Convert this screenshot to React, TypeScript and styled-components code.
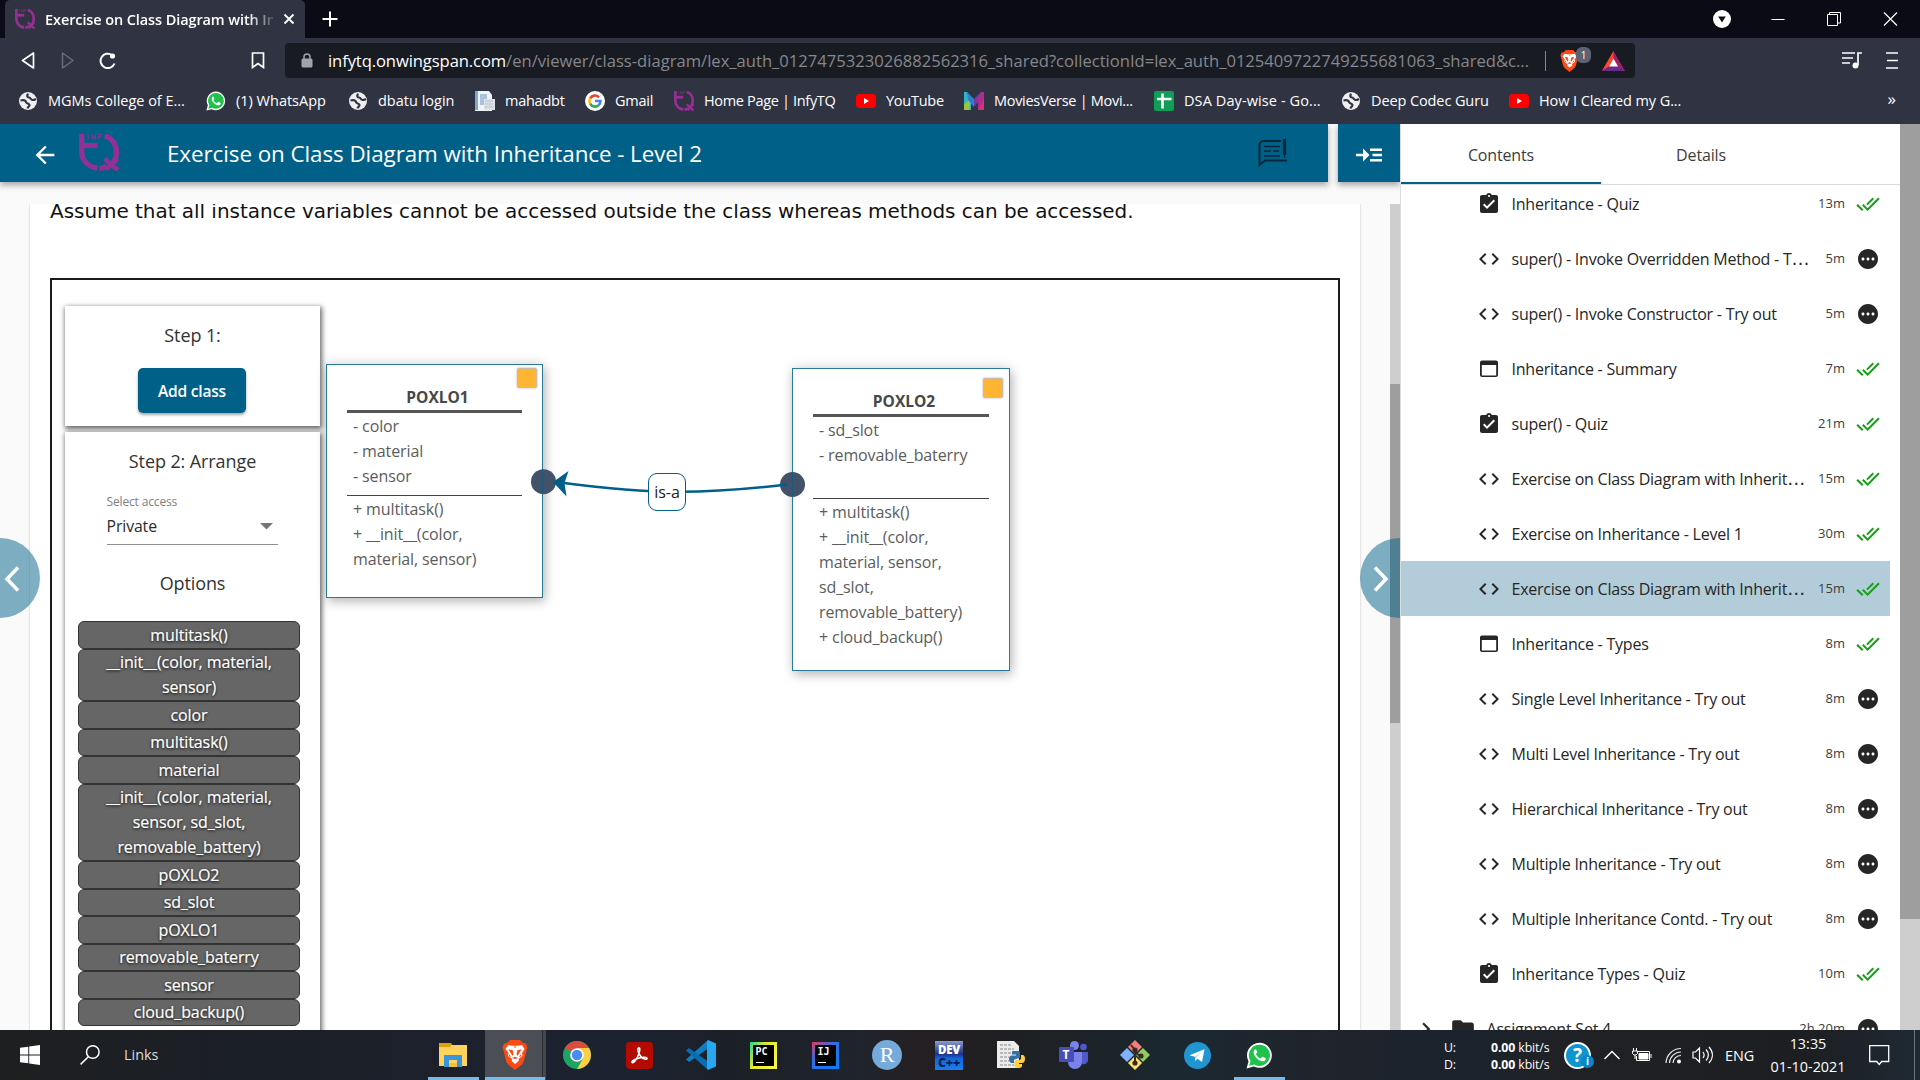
import React from 'react';
import styled, { createGlobalStyle } from 'styled-components';
import { MdArrowBack, MdAssignmentTurnedIn, MdCode, MdDoneAll, MdFolder, MdKeyboardArrowRight, MdPending } from 'react-icons/md';

const GlobalStyle = createGlobalStyle`
  *, *::before, *::after { box-sizing: border-box; }
  body { margin: 0; overflow: hidden; background: #fafafa; font-family: "Open Sans", "Noto Sans", sans-serif; }
  svg { display: block; flex: none; }
`;

const Screen = styled.div`
  width: 1920px;
  height: 1080px;
  display: flex;
  flex-direction: column;
  overflow: hidden;
`;

/* ---------- browser chrome ---------- */

const TabStrip = styled.div`
  height: 38px;
  flex: none;
  display: flex;
  align-items: center;
  background: #0a0b14;
  color: #fff;
  padding-left: 5px;
`;

const BrowserTab = styled.div`
  width: 300px;
  height: 38px;
  display: flex;
  align-items: center;
  padding: 0 10px;
  background: #303342;
  border-radius: 5px 5px 0 0;
`;

const TabTitle = styled.div`
  width: 229px;
  margin-left: 10px;
  margin-right: 10px;
  overflow: hidden;
  white-space: nowrap;
  font-size: 14.5px;
  font-weight: 600;
  letter-spacing: -0.1px;
  mask-image: linear-gradient(90deg, #000 203px, transparent 233px);
`;

const WindowControls = styled.div`
  margin-left: auto;
  display: flex;
  align-items: center;
  gap: 40px;
  padding-right: 22px;
`;

const Toolbar = styled.div`
  height: 45px;
  flex: none;
  display: flex;
  align-items: center;
  padding: 0 22px 0 21px;
  background: #303342;
`;

const NavButtons = styled.div`
  width: 264px;
  display: flex;
  align-items: center;
  gap: 25px;
`;

const BookmarkToggle = styled.div`
  margin-left: auto;
  margin-right: 20px;
`;

const AddressBar = styled.div`
  width: 1350px;
  height: 35px;
  display: flex;
  align-items: center;
  padding: 0 10px 0 16px;
  color: #a0a3aa;
  background: #191b22;
  border-radius: 4px;
`;

const Url = styled.div`
  width: 1202px;
  margin-left: 15px;
  white-space: nowrap;
  overflow: hidden;
  font-size: 16.6px;
  letter-spacing: 0px;
  color: #85878c;
`;

const UrlHost = styled.span`
  color: #fff;
  letter-spacing: -0.1px;
`;

const UrlDivider = styled.div`
  width: 1px;
  height: 20px;
  margin: 0 14px 0 15px;
  background: #85878c;
`;

const Shield = styled.div`
  position: relative;
  width: 42px;
`;

const ShieldCount = styled.span`
  position: absolute;
  left: 16px;
  top: -3px;
  width: 15px;
  height: 16px;
  border-radius: 6px;
  background: #5d6273;
  color: #fff;
  font-size: 10px;
  line-height: 16px;
  text-align: center;
`;

const ToolbarEnd = styled.div`
  margin-left: auto;
  display: flex;
  align-items: center;
  gap: 24px;
`;

const Bookmarks = styled.div`
  height: 41px;
  flex: none;
  display: flex;
  align-items: flex-start;
  padding: 6px 0 0 18px;
  color: #fff;
  background: #303342;
`;

const Bookmark = styled.div<{ $w: number; $ls: number }>`
  width: ${p => p.$w}px;
  height: 23px;
  flex: none;
  display: flex;
  align-items: center;
  gap: 10px;
  font-size: 14.5px;
  letter-spacing: ${p => p.$ls}px;
  white-space: nowrap;
`;

const More = styled.div`
  margin-left: auto;
  padding-right: 24px;
  font-size: 17px;
  line-height: 20px;
`;

/* ---------- page ---------- */

const Page = styled.div`
  height: 906px;
  flex: none;
  display: flex;
  background: #fafafa;
`;

const Viewer = styled.div`
  position: relative;
  width: 1400px;
  display: flex;
  flex-direction: column;
  overflow: hidden;
`;

const HeaderRow = styled.div`
  height: 58px;
  flex: none;
  display: flex;
  justify-content: space-between;
`;

const Header = styled.div`
  width: 1328px;
  display: flex;
  align-items: center;
  padding: 0 39px 0 31px;
  color: #fff;
  background: #006088;
  box-shadow: 0 3px 6px rgba(0, 0, 0, 0.35);
`;

const BackButton = styled.div`
  padding-top: 3px;
`;

const HeaderTitle = styled.h1`
  margin: 0 auto 0 48px;
  font-size: 22.4px;
  font-weight: 400;
  letter-spacing: -0.07px;
`;

const HeaderLogo = styled.div`
  margin: -1px 0 0 20px;
`;

const CollapseButton = styled.div`
  width: 62px;
  display: flex;
  align-items: center;
  justify-content: center;
  padding-top: 4px;
  background: #006088;
  box-shadow: 0 3px 6px rgba(0, 0, 0, 0.35);
`;

const ScrollArea = styled.div`
  height: 826px;
  margin-top: 22px;
  display: flex;
  overflow: hidden;
`;

const Card = styled.div`
  width: 1330px;
  margin: 0 30px;
  padding: 0 20px;
  background: #fff;
  box-shadow: 0 0 2px rgba(0, 0, 0, 0.25);
`;

const Statement = styled.p`
  height: 74px;
  margin: 0;
  font-family: "DejaVu Sans", Verdana, sans-serif;
  font-size: 20px;
  line-height: 14px;
  letter-spacing: -0.042px;
  white-space: nowrap;
  color: #111;
`;

const Scrollbar = styled.div<{ $w: number; $top: number }>`
  width: ${p => p.$w}px;
  flex: none;
  padding-top: ${p => p.$top}px;
  background: #cecece;
`;

const Thumb = styled.div<{ $h: number }>`
  height: ${p => p.$h}px;
  background: #9e9e9e;
`;

const Canvas = styled.div`
  position: relative;
  height: 900px;
  padding: 26px 13px;
  border: 2px solid #1b1b1d;
`;

const Panel = styled.section<{ $h: number }>`
  width: 255px;
  height: ${p => p.$h}px;
  margin-bottom: 6px;
  display: flex;
  flex-direction: column;
  align-items: center;
  background: #fff;
  box-shadow: 1px 2px 5px 1px rgba(0, 0, 0, 0.6);
`;

const PanelTitle = styled.div<{ $mt: number }>`
  margin-top: ${p => p.$mt}px;
  height: 30px;
  line-height: 30px;
  font-size: 18px;
  letter-spacing: -0.1px;
  color: #333;
`;

const AddButton = styled.button`
  width: 108px;
  height: 45px;
  margin: 18px 1px 0 0;
  padding: 0;
  border: 0;
  border-radius: 5px;
  font-family: inherit;
  font-size: 15.6px;
  font-weight: 600;
  letter-spacing: -0.25px;
  color: #fff;
  background: #006088;
  box-shadow: 0 2px 3px rgba(0, 0, 0, 0.35);
`;

const SelectField = styled.div`
  width: 171px;
  height: 54px;
  margin: 15px 0 0 -1px;
  border-bottom: 1px solid #8f8f8f;
`;

const SelectLabel = styled.div`
  height: 22px;
  line-height: 22px;
  font-size: 12px;
  letter-spacing: -0.15px;
  color: #808080;
`;

const SelectValue = styled.div`
  height: 26px;
  display: flex;
  align-items: center;
  justify-content: space-between;
  padding-right: 5px;
  font-size: 15.8px;
  letter-spacing: -0.1px;
  color: #2b2b2b;
`;

const Options = styled.div`
  width: 222px;
  margin: 23px 7px 0 0;
`;

const Option = styled.div`
  padding: 0.5px 20px 0;
  border: 1px solid #333;
  border-radius: 6px;
  font-size: 16px;
  line-height: 25px;
  letter-spacing: -0.1px;
  text-align: center;
  color: #fff;
  -webkit-text-stroke: 0.2px #fff;
  text-shadow: 0 1px 3px #000;
  background: #666;
`;

const ClassBox = styled.article<{ $x: number; $y: number; $w: number; $h: number }>`
  position: absolute;
  left: ${p => p.$x}px;
  top: ${p => p.$y}px;
  width: ${p => p.$w}px;
  height: ${p => p.$h}px;
  padding: 19px 20px 0;
  border: 1px solid #2a7a9c;
  background: #fff;
  box-shadow: 2px 4px 10px rgba(0, 0, 0, 0.25), 0 -3px 12px rgba(0, 0, 0, 0.08);
`;

const ClassName = styled.h2`
  height: 26px;
  margin: 0;
  padding-left: 6px;
  font-size: 15.5px;
  line-height: 26px;
  font-weight: 700;
  text-align: center;
  color: #474747;
`;

const ClassCorner = styled.span<{ $t: number; $r: number }>`
  position: absolute;
  top: ${p => p.$t}px;
  right: ${p => p.$r}px;
  width: 20px;
  height: 20px;
  border: 1px solid #c8bda6;
  border-radius: 2px;
  background: #ffb432;
  box-shadow: 0 0 2px rgba(60, 60, 100, 0.5);
`;

const Members = styled.ul`
  margin: 0;
  list-style: none;
  font-size: 16px;
  line-height: 25px;
  letter-spacing: -0.11px;
  color: #5c5c5c;
`;

const Attributes = styled(Members)<{ $h: number }>`
  height: ${p => p.$h}px;
  padding: 1px 0 0 6px;
  border-top: 3px solid #555;
`;

const Methods = styled(Members)`
  padding: 1px 0 0 6px;
  border-top: 1px solid #444;
`;

const Links = styled.svg`
  position: absolute;
  left: 0;
  top: 0;
`;

const LinkLabel = styled.span`
  position: absolute;
  left: 596px;
  top: 193px;
  width: 38px;
  height: 38px;
  border: 1px solid #006088;
  border-radius: 9px;
  font-size: 16px;
  line-height: 36px;
  text-align: center;
  color: #222;
  background: #fff;
`;

const PageTurn = styled.div<{ $side: 'left' | 'right' }>`
  position: absolute;
  top: 414px;
  ${p => p.$side}: -40px;
  width: 80px;
  height: 80px;
  display: flex;
  align-items: center;
  padding: 2px ${p => (p.$side === 'left' ? 20 : 12)}px 0;
  justify-content: ${p => (p.$side === 'left' ? 'flex-end' : 'flex-start')};
  border-radius: 50%;
  background: rgba(0, 96, 136, 0.5);
`;

/* ---------- sidebar ---------- */

const Sidebar = styled.aside`
  width: 500px;
  display: flex;
  flex-direction: column;
  overflow: hidden;
  border-left: 1px solid #dcdcdc;
  background: #fff;
`;

const SidebarTabs = styled.div`
  height: 61px;
  flex: none;
  display: flex;
  border-bottom: 1px solid #dcdcdc;
`;

const SidebarTab = styled.div<{ $active?: boolean }>`
  width: 200px;
  height: 60px;
  padding-top: 2px;
  border-bottom: 2px solid ${p => (p.$active ? '#006088' : 'transparent')};
  font-size: 16px;
  line-height: 58px;
  letter-spacing: -0.16px;
  text-align: center;
  color: #3c3c3c;
`;

const LessonList = styled.div`
  flex: 1;
  overflow: hidden;
`;

const LessonTrack = styled.div`
  margin-top: -9px;
`;

const Lesson = styled.div<{ $active?: boolean; $folder?: boolean }>`
  width: 489px;
  height: 55px;
  display: flex;
  align-items: center;
  padding: 0 10px 0 ${p => (p.$folder ? 12 : 76)}px;
  color: #262626;
  background: ${p => (p.$active ? '#b2cdd9' : 'transparent')};
`;

const FolderIcon = styled.div`
  margin-left: 11px;
`;

const LessonName = styled.div`
  flex: 1;
  margin-left: 10.500px;
  padding-top: 1px;
  font-size: 16px;
  line-height: 22px;
  letter-spacing: -0.23px;
  white-space: nowrap;
`;

const Ellipsis = styled.span`
  font-family: "DejaVu Sans", sans-serif;
  font-size: 18px;
  line-height: 0;
`;

const Duration = styled.div`
  margin-right: 11px;
  margin-top: -1px;
  font-size: 13px;
  color: #3d3d3d;
`;

/* ---------- taskbar ---------- */

const Taskbar = styled.div`
  height: 50px;
  flex: none;
  display: flex;
  align-items: center;
  padding-left: 20px;
  color: #fff;
  background: linear-gradient(90deg, #1e1f21 0%, #1b1f26 12%, #1c2230 33%, #1b2027 38%, #20242c 45%, #251f22 48%, #1e1f22 53%, #1b2830 61%, #20242c 69%, #1b232d 76%, #202124 82%, #1d1e22 94%, #1f2a33 100%);
`;

const SearchBox = styled.div`
  width: 342px;
  margin-left: 40px;
  display: flex;
  align-items: center;
  gap: 24px;
  font-size: 14.4px;
  line-height: 18px;
  color: #dcdcdc;
`;

const AppSlot = styled.div<{ $tile?: boolean }>`
  width: 62px;
  height: 50px;
  flex: none;
  display: grid;
  grid-template-rows: 47px 3px;
  justify-items: center;
  background: ${p => (p.$tile ? 'linear-gradient(90deg, transparent 1px, #4b4e54 1px, #4b4e54 58px, #2a2c31 58px, #2a2c31 59px, #44474d 59px, #44474d 62px)' : 'none')};
`;

const AppIcon = styled.div`
  height: 30px;
  margin-top: 10px;
  display: flex;
  align-items: center;
`;

const RunningLine = styled.div<{ $w: number }>`
  width: ${p => p.$w}px;
  height: 3px;
  background: #76b9ed;
`;

const SquareApp = styled.div<{ $frame: string }>`
  width: 27px;
  height: 27px;
  padding: 3px;
  background: ${p => p.$frame};
`;

const SquareAppInner = styled.div`
  width: 21px;
  height: 21px;
  padding-left: 3px;
  background: #000;
  font-family: "DejaVu Sans Mono", monospace;
  font-size: 10px;
  line-height: 14px;
  font-weight: 700;
  &::after {
    content: "";
    display: block;
    width: 8px;
    height: 1px;
    margin-top: 3px;
    background: #fff;
  }
`;

const RoundApp = styled.div`
  width: 30px;
  height: 30px;
  border-radius: 50%;
  font-family: "Liberation Serif", serif;
  font-size: 22px;
  line-height: 29px;
  text-align: center;
  background: #75aadb;
`;

const DevApp = styled.div`
  width: 28px;
  height: 29px;
  font-size: 11.5px;
  line-height: 13px;
  padding-top: 2px;
  font-weight: 800;
  letter-spacing: -0.2px;
  text-align: center;
  background: linear-gradient(#8a9cd0, #20318a 45%, #1166dd 60%, #1d7cf0);
`;

const DevSuffix = styled.div`
  font-size: 12.5px;
  color: #0a1f4d;
`;

const Tray = styled.div`
  margin-left: auto;
  height: 50px;
  display: flex;
  align-items: center;
`;

const NetMeter = styled.div`
  width: 120px;
  display: grid;
  grid-template-columns: 47px 1fr;
  font-size: 12.3px;
  line-height: 17px;
  letter-spacing: -0.1px;
  white-space: nowrap;
  padding-top: 1px;
`;

const TrayItem = styled.div<{ $w: number }>`
  width: ${p => p.$w}px;
  flex: none;
  font-size: 14.4px;
`;

const Clock = styled.div`
  width: 110px;
  padding-bottom: 1px;
  font-size: 14.4px;
  line-height: 23px;
  text-align: center;
`;

const Edge = styled.div`
  width: 6px;
  height: 50px;
  border-left: 1px solid #6c7277;
`;

/* ---------- drawings ---------- */

const InfyLogo = ({ w, h }: { w: number; h: number }) => (
  <svg width={w} height={h} viewBox="0 0 39 37" preserveAspectRatio="none" fill="none" stroke="#962f93" strokeWidth="5.200">
    <path d="M2.600 0v17c0 9 5.500 15.500 15.400 17.300" />
    <path d="M4 11.500h14" />
    <path d="M25 2c7 1.500 11.500 8 11.500 16 0 5-1.500 8.500-4 11M20 34.500c2.500-.3 5-1.500 7-3" />
    <path d="M25 24.500l4.500 4.500M37.500 24.500l-11 11M29 29l9 7" strokeWidth="4.500" />
    <path d="M9 .5v5M13 5.500v-5l3 5v-5M19 5.500v-5h3M19 3h3" strokeWidth="0.900" />
  </svg>
);

const Globe = () => (
  <svg width="20" height="20" viewBox="0 0 20 20" fill="none" stroke="#303342" strokeWidth="2.200">
    <circle cx="10" cy="10" r="9" fill="#efeff1" stroke="none" />
    <path d="M2.500 9.500C5 9 7.500 9 8 11s3 1 3.500 3c.2 1.200-1.500 1.500-2 3.500" />
    <path d="M10.500 3c-2 1-1.500 3.500.5 3.500s1.500 2.500 3.500 2.500 2.500-.5 3.500-1" />
  </svg>
);

const WhatsAppMark = ({ size }: { size: number }) => (
  <svg width={size} height={size} viewBox="0 0 28 28">
    <path d="M14 .8a13 13 0 0 0-11.400 19.300L.6 27.400l7.500-1.900A13 13 0 1 0 14 .8z" fill="#fff" />
    <path d="M14 2.800a11 11 0 0 0-9.300 16.900l-1.400 5 5.200-1.300A11 11 0 1 0 14 2.800z" fill="#1fc24b" />
    <path d="M9.800 7.800c-.5 0-1.300.5-1.700 1.500-1.300 3.300 3.500 9.700 8.500 10.700 2 .3 3.700-.9 3.900-2.500 0-.6 0-.7-.6-1l-2.400-1.200c-.5-.2-.7-.1-1 .3l-1 1.200c-.3.3-.6.3-1 .1-1.600-.8-3.100-2.200-4-4-.2-.3-.1-.6.200-.9l.8-1c.2-.3.1-.6 0-.9l-1-2.100c-.1-.2-.3-.3-.7-.2z" fill="#fff" />
  </svg>
);

const DocMark = () => (
  <svg width="20" height="20" viewBox="0 0 20 20">
    <path d="M0 0h14l3 4v16H0z" fill="#f2f3f5" />
    <path d="M0 0h3v19H0z" fill="#7ea9d2" />
    <path d="M5 3h7v11H5z" fill="#a9c3dc" />
    <path d="M9 8h11v11H9z" fill="#dde2e8" />
    <path d="M10 10h8M10 13h8M10 16h8" stroke="#b5bfca" />
  </svg>
);

const GoogleMark = () => (
  <svg width="20" height="20" viewBox="0 0 20 20" fill="none" strokeWidth="2.600">
    <circle cx="10" cy="10" r="10" fill="#fff" />
    <path d="M14 6.300A5.600 5.600 0 0 0 5.100 7.400" stroke="#ea4335" />
    <path d="M5.100 7.300a5.600 5.600 0 0 0 0 5.400" stroke="#fbbc05" />
    <path d="M5.100 12.600a5.600 5.600 0 0 0 8.600 1.600" stroke="#34a853" />
    <path d="M10 10h5.500c0 2-.7 3.300-1.900 4.300" stroke="#4285f4" />
  </svg>
);

const YouTubeMark = () => (
  <svg width="20" height="20" viewBox="0 0 20 20">
    <rect y="3" width="20" height="14" rx="3.500" fill="#f00" />
    <path d="M8 7l5 3-5 3z" fill="#fff" />
  </svg>
);

const MoviesMark = () => (
  <svg width="20" height="20" viewBox="0 0 20 20">
    <path d="M0 1h3l4 6v12H0z" fill="#2fb4c8" />
    <path d="M0 13l7-5-2 11H0z" fill="#9bc53d" />
    <path d="M3 1l7 7v8L4 9z" fill="#2f7fc9" />
    <path d="M17 1l-7 7v8l6-7z" fill="#6d3fa5" />
    <path d="M20 1v18h-6V7l3-6z" fill="#b02a8f" />
    <path d="M20 8v11h-6z" fill="#d6336f" />
  </svg>
);

const SheetMark = () => (
  <svg width="20" height="20" viewBox="0 0 20 20">
    <rect width="20" height="20" rx="2" fill="#0f9d58" />
    <path d="M8.500 2.500v15M3 8h14.500" stroke="#fff" strokeWidth="2.600" />
  </svg>
);

const BraveLion = ({ w, h }: { w: number; h: number }) => (
  <svg width={w} height={h} viewBox="0 0 26 30" preserveAspectRatio="none">
    <path d="M8 0h10l3 3 3 .5 1.500 4-1 3-2.500 10c-1 4-4 5.500-9 9.500-5-4-8-5.500-9-9.500L1.500 10.500l-1-3L2 3.500 5 3z" fill="#fb4a14" />
    <path d="M6 5l4 .7h6L20 5l2.500 4-2.500 4 .5 3-4 3 .3 2L13 24l-3.300-3 .3-2-4-3 .5-3L3.500 9z" fill="#fff" />
    <path d="M6.500 9.500l4 .5 1 4-1 2zM19.500 9.500l-4 .5-1 4 1 2zM10 18l3 1 3-1-3-1.300zM11.500 6.500h3L13 8zM7 14l2 3-2-.5zM19 14l-2 3 2-.5z" fill="#fb4a14" />
  </svg>
);

const WebAsset = () => (
  <svg width="24" height="24" viewBox="0 0 24 24" fill="#262626">
    <path d="M19 3.500H5c-1.110 0-2 .9-2 2v12.500c0 1.100.89 2 2 2h14c1.100 0 2-.9 2-2V5.500c0-1.100-.89-2-2-2zm.2 15H4.800V8h14.400z" />
  </svg>
);

const FeedbackMark = () => (
  <svg width="31" height="28" viewBox="0 0 31 28" fill="none" stroke="#04283a" strokeWidth="2">
    <path d="M23 2H6C3 2 1.500 4 1.500 6.500V26L7 21.500h22" />
    <path d="M6 7.500h16M6 12h7M15 12h6M6 17h16" strokeWidth="1.500" />
    <path d="M26.500 0v16" strokeWidth="3.200" />
    <path d="M26.500 16v3" strokeWidth="1.200" />
  </svg>
);

const Explorer = () => (
  <svg width="28" height="24" viewBox="0 0 28 24">
    <path d="M0 0h12l2 3v6H0z" fill="#e0a008" />
    <path d="M0 4h11l2-2h15v21H0z" fill="#ffd35c" />
    <path d="M5 24V12h18v12h-5v-7h-8v7z" fill="#3b94de" />
    <path d="M10 20h8v4h-8z" fill="#f2c23c" />
  </svg>
);

const Chrome = () => (
  <svg width="28" height="28" viewBox="0 0 28 28">
    <circle cx="14" cy="14" r="14" fill="#1da462" />
    <path d="M14 14L1.900 7A14 14 0 0 1 26.100 7z" fill="#dd4b3e" />
    <path d="M14 7h12.100A14 14 0 0 1 14 28l6-10.500z" fill="#ffcd46" />
    <circle cx="14" cy="14" r="6.800" fill="#fff" />
    <circle cx="14" cy="14" r="5.200" fill="#4a8af4" />
  </svg>
);

const Acrobat = () => (
  <svg width="27" height="27" viewBox="0 0 27 27">
    <rect width="27" height="27" rx="4" fill="#b30b00" />
    <path d="M12.500 6c2.500-1 1 5-1 9s-4.500 6.500-5.500 5.500 3-3.500 7-4.500 8-1 8 .5-4 .8-6.500-2.500S11 7 12.500 6z" fill="none" stroke="#fff" strokeWidth="1.600" />
  </svg>
);

const VsCode = () => (
  <svg width="30" height="30" viewBox="0 0 30 30">
    <path d="M22 0L0 19.500l3 2.500L22 8.500z" fill="#0d7dc4" />
    <path d="M22 30L0 10.500 3 8l19 13.500z" fill="#0a6cb0" />
    <path d="M22 0l8 3.500v23L22 30l-1-2V2z" fill="#28a6ee" />
  </svg>
);

const PyFile = () => (
  <svg width="28" height="28" viewBox="0 0 28 28">
    <path d="M0 0h17l5 5v22H0z" fill="#ececec" />
    <path d="M3 4h11M3 8h14M3 12h11M3 16h9M3 20h9M3 24h14" stroke="#a9a9a9" strokeWidth="1.300" strokeDasharray="3 1" />
    <path d="M16 10h5c2 0 2 1 2 3v3c0 2-5 1-6 3v3h-2c-2 0-3-2-3-4s1-3.500 3-3.500h4v-1h-4v-2c0-1 0-1.500 1-1.500z" fill="#3470a2" />
    <path d="M24 14h1.500c2 0 2.500 2 2.500 4s-1 4-3 4h-3v1h3v2c0 1.500-1.500 2-4 2s-3.500-1-3.500-2.500V21c0-1 1-2 2-2h2.500c1.500 0 2-1 2-2z" fill="#ffcf3f" />
  </svg>
);

const TeamsBox = styled.div`
  display: grid;
  width: 29px;
  height: 28px;
`;

const TeamsDrawing = styled.svg`
  grid-area: 1 / 1;
`;

const TeamsLetter = styled.span`
  grid-area: 1 / 1;
  padding: 5px 0 0 4px;
  font-size: 12px;
  line-height: 17px;
  font-weight: 700;
`;

const Teams = () => (
  <TeamsBox>
    <TeamsDrawing width="29" height="28" viewBox="0 0 29 28">
      <circle cx="24.500" cy="6" r="3.300" fill="#5059c9" />
      <circle cx="15.500" cy="4.500" r="4.500" fill="#7b83eb" />
      <path d="M20 11h9v8c0 3-3 5-6 4z" fill="#5059c9" />
      <path d="M9 11h14v10a7 7 0 0 1-14 0z" fill="#7b83eb" />
      <rect y="6" width="15" height="15" rx="1" fill="#464eb8" />
    </TeamsDrawing>
    <TeamsLetter>T</TeamsLetter>
  </TeamsBox>
);

const GitMark = () => (
  <svg width="30" height="30" viewBox="0 0 30 30">
    <path d="M15 0l7 7-7 7-7-7z" fill="#f27e7e" />
    <path d="M7 8l7 7-7 7-7-7z" fill="#80b3ff" />
    <path d="M23 8l7 7-7 7-7-7z" fill="#8fce5c" />
    <path d="M15 16l7 7-7 7-7-7z" fill="#ffe16b" />
    <path d="M11 5l4 5v15M15 12l6 5" stroke="#3a2a26" strokeWidth="2" fill="none" />
    <circle cx="15" cy="10" r="2.600" fill="#3a2a26" />
    <circle cx="15" cy="23" r="2.600" fill="#3a2a26" />
    <circle cx="21" cy="16" r="2.600" fill="#3a2a26" />
  </svg>
);

const Telegram = () => (
  <svg width="27" height="27" viewBox="0 0 27 27">
    <circle cx="13.500" cy="13.500" r="13.500" fill="#2095d2" />
    <path d="M5.500 13.200L20.500 7.300 18 20l-4.500-3.200-2.200 2.100-.5-4.200z" fill="#fff" />
    <path d="M10.800 14.700l6.700-4.700-5.500 5.700-.7 3.200z" fill="#b5d9ee" />
  </svg>
);

const HelpMark = styled.div`
  position: relative;
  width: 27px;
  height: 27px;
  border: 2px solid #fff;
  border-radius: 50%;
  background: #0f94d2;
  font-size: 19px;
  line-height: 22px;
  font-weight: 700;
  text-align: center;
`;

const HelpInfo = styled.span`
  position: absolute;
  right: -5px;
  bottom: -1px;
  width: 13px;
  height: 13px;
  border-radius: 50%;
  background: #0a86c6;
  font-size: 10px;
  line-height: 12px;
`;

/* ---------- data ---------- */

const bookmarks: [React.ReactNode, string, number, number][] = [
  [<Globe />, 'MGMs College of E...', 188, -0.02],
  [<WhatsAppMark size={20} />, '(1) WhatsApp', 142, 0],
  [<Globe />, 'dbatu login', 127, 0],
  [<DocMark />, 'mahadbt', 110, -0.25],
  [<GoogleMark />, 'Gmail', 89, -0.25],
  [<InfyLogo w={20} h={20} />, 'Home Page | InfyTQ', 182, -0.33],
  [<YouTubeMark />, 'YouTube', 108, -0.25],
  [<MoviesMark />, 'MoviesVerse | Movi...', 190, -0.3],
  [<SheetMark />, 'DSA Day-wise - Go...', 187, 0.1],
  [<Globe />, 'Deep Codec Guru', 168, -0.1],
  [<YouTubeMark />, 'How I Cleared my G...', 190, -0.1],
];

type LessonRow = { kind: 'quiz' | 'code' | 'page'; name: string; time: string; done: boolean; active?: boolean };
const lessons: LessonRow[] = [
  { kind: 'quiz', name: 'Inheritance - Quiz', time: '13m', done: true },
  { kind: 'code', name: 'super() - Invoke Overridden Method - T…', time: '5m', done: false },
  { kind: 'code', name: 'super() - Invoke Constructor - Try out', time: '5m', done: false },
  { kind: 'page', name: 'Inheritance - Summary', time: '7m', done: true },
  { kind: 'quiz', name: 'super() - Quiz', time: '21m', done: true },
  { kind: 'code', name: 'Exercise on Class Diagram with Inherit…', time: '15m', done: true },
  { kind: 'code', name: 'Exercise on Inheritance - Level 1', time: '30m', done: true },
  { kind: 'code', name: 'Exercise on Class Diagram with Inherit…', time: '15m', done: true, active: true },
  { kind: 'page', name: 'Inheritance - Types', time: '8m', done: true },
  { kind: 'code', name: 'Single Level Inheritance - Try out', time: '8m', done: false },
  { kind: 'code', name: 'Multi Level Inheritance - Try out', time: '8m', done: false },
  { kind: 'code', name: 'Hierarchical Inheritance - Try out', time: '8m', done: false },
  { kind: 'code', name: 'Multiple Inheritance - Try out', time: '8m', done: false },
  { kind: 'code', name: 'Multiple Inheritance Contd. - Try out', time: '8m', done: false },
  { kind: 'quiz', name: 'Inheritance Types - Quiz', time: '10m', done: true },
];

const kindIcon = {
  quiz: <MdAssignmentTurnedIn size={24} />,
  code: <MdCode size={24} />,
  page: <WebAsset />,
};

const options = [
  'multitask()', '__init__(color, material, sensor)', 'color', 'multitask()', 'material',
  '__init__(color, material, sensor, sd_slot, removable_battery)', 'pOXLO2', 'sd_slot', 'pOXLO1',
  'removable_baterry', 'sensor', 'cloud_backup()',
];

const classes = [
  {
    name: 'POXLO1', x: 274, y: 84, w: 217, h: 234, corner: [3, 5], attributesHeight: 85,
    attributes: ['- color', '- material', '- sensor'],
    methods: ['+ multitask()', '+ __init__(color,', 'material, sensor)'],
  },
  {
    name: 'POXLO2', x: 740, y: 88, w: 218, h: 303, corner: [9, 6], attributesHeight: 84,
    attributes: ['- sd_slot', '- removable_baterry'],
    methods: ['+ multitask()', '+ __init__(color,', 'material, sensor,', 'sd_slot,', 'removable_battery)', '+ cloud_backup()'],
  },
];

const apps: { icon: React.ReactNode; line?: number; tile?: boolean }[] = [
  { icon: <Explorer />, line: 51 },
  { icon: <BraveLion w={26} h={30} />, line: 60, tile: true },
  { icon: <Chrome /> },
  { icon: <Acrobat /> },
  { icon: <VsCode /> },
  { icon: <SquareApp $frame="linear-gradient(120deg, #21d789, #e5e92a 40%, #fcf84a)"><SquareAppInner>PC</SquareAppInner></SquareApp> },
  { icon: <SquareApp $frame="linear-gradient(140deg, #e8365f, #2b6fe8 40%, #087cfa)"><SquareAppInner>IJ</SquareAppInner></SquareApp> },
  { icon: <RoundApp>R</RoundApp> },
  { icon: <DevApp>DEV<DevSuffix>C++</DevSuffix></DevApp> },
  { icon: <PyFile /> },
  { icon: <Teams /> },
  { icon: <GitMark /> },
  { icon: <Telegram /> },
  { icon: <WhatsAppMark size={27} />, line: 51 },
];

const Status = ({ done }: { done: boolean }) =>
  done ? <MdDoneAll size={24} color="#16a016" /> : <MdPending size={24} />;

const Name = ({ text }: { text: string }) =>
  text.endsWith('…') ? <LessonName>{text.slice(0, -1)}<Ellipsis>…</Ellipsis></LessonName> : <LessonName>{text}</LessonName>;

export default function App() {
  return (
    <Screen>
      <GlobalStyle />
      <TabStrip>
        <BrowserTab>
          <InfyLogo w={20} h={20} />
          <TabTitle>Exercise on Class Diagram with Inheritance</TabTitle>
          <svg width="12" height="12" viewBox="0 0 12 12" stroke="#fff" strokeWidth="1.800"><path d="M1.500 1.500l9 9M10.500 1.500l-9 9" /></svg>
        </BrowserTab>
        <svg width="50" height="16" viewBox="-17 0 50 16" stroke="#fff" strokeWidth="2"><path d="M8 0.500v15M0.500 8h15" /></svg>
        <WindowControls>
          <svg width="18" height="18" viewBox="0 0 18 18"><circle cx="9" cy="9" r="9" fill="#fff" /><path d="M5.200 6.500h7.600L9 12.500z" fill="#0a0b14" /></svg>
          <svg width="14" height="14" viewBox="0 0 14 14" stroke="#fff"><path d="M0.500 7.500h13" /></svg>
          <svg width="18" height="14" viewBox="-2 0 18 14" fill="none" stroke="#fff"><path d="M.5 2.500h10v11H.5zM2.500 2.500v-2h11v10.500h-3" /></svg>
          <svg width="15" height="14" viewBox="0 0 15 14" stroke="#fff" strokeWidth="1.200"><path d="M1 .5l13 13M14 .5l-13 13" /></svg>
        </WindowControls>
      </TabStrip>
      <Toolbar>
        <NavButtons>
          <svg width="14" height="17" viewBox="0 0 14 17" fill="none" stroke="#fff" strokeWidth="1.700" strokeLinejoin="round"><path d="M12.500 1v15L1.500 8.500z" /></svg>
          <svg width="14" height="17" viewBox="-1 0 14 17" fill="none" stroke="#6a6c78" strokeWidth="1.500" strokeLinejoin="round"><path d="M1.500 1v15l10.500-7.500z" /></svg>
          <svg width="17" height="17" viewBox="0 0 17 17" fill="none" stroke="#fff" strokeWidth="2"><path d="M15.500 11.500A7.200 7.200 0 1 1 13 3" /><circle cx="13.500" cy="4" r="2.600" fill="#fff" stroke="none" /></svg>
          <BookmarkToggle>
            <svg width="14" height="17" viewBox="0 0 14 17" fill="none" stroke="#fff" strokeWidth="1.700"><path d="M1.500 1h11v14.500L7 11.500l-5.500 4z" /></svg>
          </BookmarkToggle>
        </NavButtons>
        <AddressBar>
          <svg width="12" height="15" viewBox="0 0 12 15"><rect x="0.500" y="5.500" width="11" height="9" rx="1.500" fill="#a0a3aa" /><path d="M3 6V4a3 3 0 0 1 6 0v2" fill="none" stroke="#a0a3aa" strokeWidth="1.500" /></svg>
          <Url><UrlHost>infytq.onwingspan.com</UrlHost>/en/viewer/class-diagram/lex_auth_0127475323026882562316_shared?collectionId=lex_auth_0125409722749255681063_shared&amp;c...</Url>
          <UrlDivider />
          <Shield>
            <BraveLion w={19} h={22} />
            <ShieldCount>1</ShieldCount>
          </Shield>
          <svg width="23" height="20" viewBox="0 0 23 20"><path d="M11.500 0L0 20h23z" fill="#9e1f63" /><path d="M11.500 0L0 20l7-4.500L11.500 8z" fill="#ff4724" /><path d="M0 20h23l-7-4.500H7z" fill="#662d91" /><path d="M11.500 7.500L7 15.500h9z" fill="#fff" /></svg>
        </AddressBar>
        <ToolbarEnd>
          <svg width="20" height="17" viewBox="0 0 20 17" fill="none" stroke="#fff" strokeWidth="1.700"><path d="M0 1h13M0 6h11M0 11h8M16 13V1h4" /><circle cx="13.500" cy="13.500" r="3" fill="#fff" stroke="none" /></svg>
          <svg width="12" height="17" viewBox="0 0 12 17" stroke="#fff" strokeWidth="1.700"><path d="M0 1h12M1 8.500h11M0 16h12" /></svg>
        </ToolbarEnd>
      </Toolbar>
      <Bookmarks>
        {bookmarks.map(([icon, label, w, ls]) => (
          <Bookmark key={label} $w={w} $ls={ls}>{icon}{label}</Bookmark>
        ))}
        <More>»</More>
      </Bookmarks>

      <Page>
        <Viewer>
          <HeaderRow>
            <Header>
              <BackButton><MdArrowBack size={28} /></BackButton>
              <HeaderLogo><InfyLogo w={40} h={37} /></HeaderLogo>
              <HeaderTitle>Exercise on Class Diagram with Inheritance - Level 2</HeaderTitle>
              <FeedbackMark />
            </Header>
            <CollapseButton>
              <svg width="26" height="14" viewBox="0 0 26 14" fill="#fff"><path d="M0 5.800h7V.5L13.500 7 7 13.500V8.200H0zM14 .5h12v2.400H14zM16.500 5.800H26v2.400h-9.500zM14 11.100h12v2.400H14z" /></svg>
            </CollapseButton>
          </HeaderRow>
          <ScrollArea>
            <Card>
              <Statement>Assume that all instance variables cannot be accessed outside the class whereas methods can be accessed.</Statement>
              <Canvas>
                <Panel $h={120}>
                  <PanelTitle $mt={14}>Step 1:</PanelTitle>
                  <AddButton>Add class</AddButton>
                </Panel>
                <Panel $h={700}>
                  <PanelTitle $mt={14}>Step 2: Arrange</PanelTitle>
                  <SelectField>
                    <SelectLabel>Select access</SelectLabel>
                    <SelectValue>
                      Private
                      <svg width="13" height="7" viewBox="0 0 13 7" fill="#757575"><path d="M0 0h13L6.500 6.500z" /></svg>
                    </SelectValue>
                  </SelectField>
                  <PanelTitle $mt={23}>Options</PanelTitle>
                  <Options>
                    {options.map((o, i) => <Option key={i}>{o}</Option>)}
                  </Options>
                </Panel>
                {classes.map(c => (
                  <ClassBox key={c.name} $x={c.x} $y={c.y} $w={c.w} $h={c.h}>
                    <ClassCorner $t={c.corner[0]} $r={c.corner[1]} />
                    <ClassName>{c.name}</ClassName>
                    <Attributes $h={c.attributesHeight}>{c.attributes.map(a => <li key={a}>{a}</li>)}</Attributes>
                    <Methods>{c.methods.map(m => <li key={m}>{m}</li>)}</Methods>
                  </ClassBox>
                ))}
                <Links width="1000" height="400" viewBox="0 0 1000 400">
                  <circle cx="491.500" cy="201.700" r="12.500" fill="#42526a" />
                  <circle cx="740.500" cy="204.500" r="12.500" fill="#42526a" />
                  <path d="M735 204.500C650 214.500 600 214.500 512 203" fill="none" stroke="#006088" strokeWidth="2.500" />
                  <path d="M501 202l15.500-11-4 12 2 13.500z" fill="#006088" />
                  <path d="M490.500 189v25M740.500 192v25" stroke="#1c5a7c" />
                </Links>
                <LinkLabel>is-a</LinkLabel>
              </Canvas>
            </Card>
            <Scrollbar $w={10} $top={180}><Thumb $h={339} /></Scrollbar>
          </ScrollArea>
          <PageTurn $side="left">
            <svg width="16" height="26" viewBox="0 0 16 26" fill="none" stroke="#fff" strokeWidth="3.500"><path d="M14 1.500L3 13l11 11.500" /></svg>
          </PageTurn>
          <PageTurn $side="right">
            <svg width="16" height="26" viewBox="0 0 16 26" fill="none" stroke="#fff" strokeWidth="3.500"><path d="M3 1.500L14 13 3 24.500" /></svg>
          </PageTurn>
        </Viewer>
        <Sidebar>
          <SidebarTabs>
            <SidebarTab $active>Contents</SidebarTab>
            <SidebarTab>Details</SidebarTab>
          </SidebarTabs>
          <LessonList>
            <LessonTrack>
              {lessons.map((l, i) => (
                <Lesson key={i} $active={l.active}>
                  {kindIcon[l.kind]}
                  <Name text={l.name} />
                  <Duration>{l.time}</Duration>
                  <Status done={l.done} />
                </Lesson>
              ))}
              <Lesson $folder>
                <MdKeyboardArrowRight size={26} />
                <FolderIcon><MdFolder size={26} /></FolderIcon>
                <LessonName>Assignment Set 4</LessonName>
                <Duration>2h 20m</Duration>
                <Status done={false} />
              </Lesson>
            </LessonTrack>
          </LessonList>
        </Sidebar>
        <Scrollbar $w={20} $top={0}><Thumb $h={795} /></Scrollbar>
      </Page>

      <Taskbar>
        <svg width="20" height="20" viewBox="0 0 20 20" fill="#fff"><path d="M0 2.800l8.300-1.100v7.800H0zM9.200 1.600L20 0v9.500H9.200zM0 10.400h8.300v7.900L0 17.200zM9.200 10.400H20V20L9.200 18.400z" /></svg>
        <SearchBox>
          <svg width="20" height="20" viewBox="0 0 20 20" fill="none" stroke="#fff" strokeWidth="1.500"><circle cx="12.800" cy="7" r="6.300" /><path d="M8.300 11.700L.6 19.400" /></svg>
          Links
        </SearchBox>
        {apps.map((a, i) => (
          <AppSlot key={i} $tile={a.tile}>
            <AppIcon>{a.icon}</AppIcon>
            {a.line && <RunningLine $w={a.line} />}
          </AppSlot>
        ))}
        <Tray>
          <NetMeter>
            <span>U:</span><span><b>0.00</b> kbit/s</span>
            <span>D:</span><span><b>0.00</b> kbit/s</span>
          </NetMeter>
          <TrayItem $w={40}><HelpMark>?<HelpInfo>i</HelpInfo></HelpMark></TrayItem>
          <TrayItem $w={28}><svg width="16" height="10" viewBox="0 0 16 10" fill="none" stroke="#fff" strokeWidth="1.400"><path d="M.5 9L8 1.500 15.500 9" /></svg></TrayItem>
          <TrayItem $w={33}><svg width="20" height="15" viewBox="0 0 20 15" fill="none" stroke="#fff"><path d="M5 3.500h12.500v9H4.500V8" /><path d="M7 5.500h9v5.500H7z" fill="#fff" /><path d="M19 6v4M1.500 0v3M4.500 0v3M.5 3h5v2.500L4 7H2L.5 5.500zM3 7v4" /></svg></TrayItem>
          <TrayItem $w={27}><svg width="17" height="17" viewBox="0 0 17 17" fill="none" stroke="#e6e6e6" strokeWidth="1.200"><path d="M1 16A15 15 0 0 1 16 1.500M4.500 16A11.500 11.500 0 0 1 16 5M8 16a8 8 0 0 1 8-7.500" /><circle cx="14" cy="14.500" r="2" fill="#fff" stroke="none" /></svg></TrayItem>
          <TrayItem $w={33}><svg width="21" height="18" viewBox="0 0 21 18" fill="none" stroke="#fff" strokeWidth="1.200"><path d="M1 6h2.500L7.500 2v14l-4-4H1zM11 6c1.500 2 1.500 4 0 6M14 3.500c3 3.500 3 7.500 0 11M17 1c4.500 5 4.500 11 0 16" /></svg></TrayItem>
          <TrayItem $w={28}>ENG</TrayItem>
          <Clock>13:35<br />01-10-2021</Clock>
          <TrayItem $w={51}><svg width="27" height="21" viewBox="-6 0 27 21" fill="none" stroke="#fff" strokeWidth="1.300"><path d="M.7.7h19v15.800h-7l-2.500 3-2.500-3h-7z" /></svg></TrayItem>
          <Edge />
        </Tray>
      </Taskbar>
    </Screen>
  );
}
